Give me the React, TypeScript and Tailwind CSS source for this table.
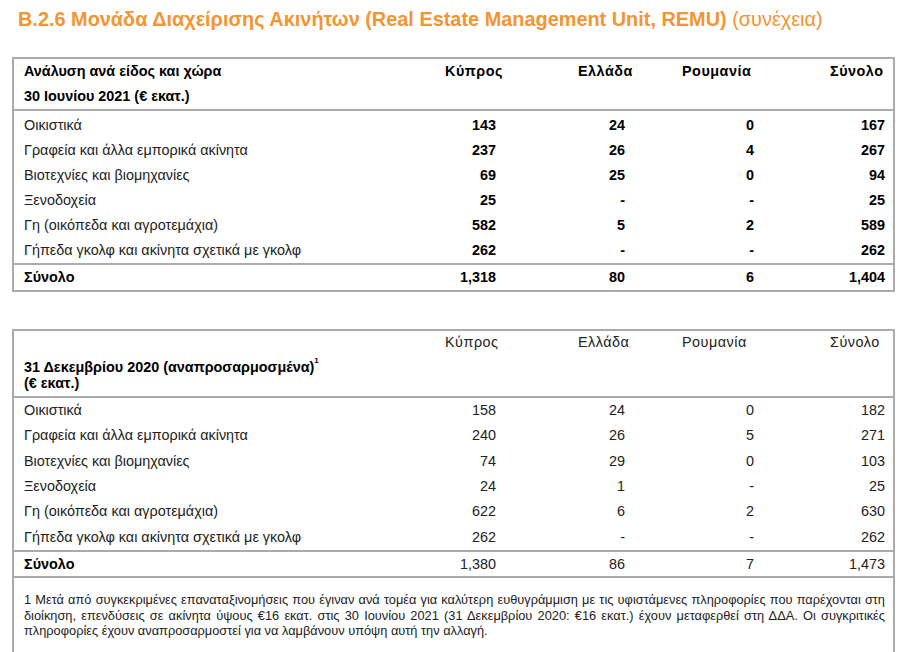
import React from "react";

type Row = { label: string; v: string[] };

const rows1: Row[] = [
  { label: "Οικιστικά", v: ["143", "24", "0", "167"] },
  { label: "Γραφεία και άλλα εμπορικά ακίνητα", v: ["237", "26", "4", "267"] },
  { label: "Βιοτεχνίες και βιομηχανίες", v: ["69", "25", "0", "94"] },
  { label: "Ξενοδοχεία", v: ["25", "-", "-", "25"] },
  { label: "Γη (οικόπεδα και αγροτεμάχια)", v: ["582", "5", "2", "589"] },
  { label: "Γήπεδα γκολφ και ακίνητα σχετικά με γκολφ", v: ["262", "-", "-", "262"] },
];
const total1 = ["1,318", "80", "6", "1,404"];

const rows2: Row[] = [
  { label: "Οικιστικά", v: ["158", "24", "0", "182"] },
  { label: "Γραφεία και άλλα εμπορικά ακίνητα", v: ["240", "26", "5", "271"] },
  { label: "Βιοτεχνίες και βιομηχανίες", v: ["74", "29", "0", "103"] },
  { label: "Ξενοδοχεία", v: ["24", "1", "-", "25"] },
  { label: "Γη (οικόπεδα και αγροτεμάχια)", v: ["622", "6", "2", "630"] },
  { label: "Γήπεδα γκολφ και ακίνητα σχετικά με γκολφ", v: ["262", "-", "-", "262"] },
];
const total2 = ["1,380", "86", "7", "1,473"];

const headers = ["Κύπρος", "Ελλάδα", "Ρουμανία", "Σύνολο"];

const GRID = "grid grid-cols-[431px_56px_129px_127px_130px]";
const numPad = ["pr-[5px]", "pr-[5px]", "pr-[3px]", "pr-[2px]"];
const headPad = ["pl-0", "pl-[77px]", "pl-[52px]", "pl-[73px]"];

function HeaderCells({ bold }: { bold: boolean }) {
  return (
    <>
      {headers.map((h, i) => (
        <div
          key={h}
          className={`${headPad[i]} text-left whitespace-nowrap tracking-[0.5px] ${bold ? "font-bold text-black" : "text-[#222]"}`}
        >
          {h}
        </div>
      ))}
    </>
  );
}

function DataRow({ r, bold, h }: { r: Row; bold: boolean; h: string }) {
  return (
    <div className={`${GRID} ${h} items-center`}>
      <div className="pl-[10px] whitespace-nowrap text-[#222]">{r.label}</div>
      {r.v.map((x, i) => (
        <div
          key={i}
          className={`${numPad[i]} text-right whitespace-nowrap ${bold ? "font-bold text-black" : "text-[#222]"}`}
        >
          {x}
        </div>
      ))}
    </div>
  );
}

export default function App() {
  return (
    <div
      className="w-[900px] h-[652px] overflow-hidden bg-white text-[14.4px]"
      style={{ fontFamily: '"Liberation Sans", Arial, sans-serif' }}
    >
      <div className="pl-[18px] pt-[7px] leading-[24px] text-[19.9px] text-[#f29532] whitespace-nowrap">
        <span className="font-bold">
          B.2.6 Μονάδα Διαχείρισης Ακινήτων (Real Estate Management Unit, REMU)
        </span>{" "}
        <span>(συνέχεια)</span>
      </div>

      {/* Table 1 */}
      <div className="ml-[12px] mt-[26px] w-[883px] border-2 border-[#ababab]">
        <div className={`${GRID} h-[25px] items-center`}>
          <div className="pl-[10px] font-bold text-black whitespace-nowrap">
            Ανάλυση ανά είδος και χώρα
          </div>
          <HeaderCells bold />
        </div>
        <div className="h-[25px] flex items-center pl-[10px] font-bold text-black">
          30 Ιουνίου 2021 (€ εκατ.)
        </div>
        <div className="border-t-2 border-[#ababab] pt-[2px]">
          {rows1.map((r) => (
            <DataRow key={r.label} r={r} bold h="h-[25px]" />
          ))}
        </div>
        <div className="border-t-2 border-[#ababab]">
          <div className={`${GRID} h-[25px] items-center`}>
            <div className="pl-[10px] font-bold text-black">Σύνολο</div>
            {total1.map((x, i) => (
              <div key={i} className={`${numPad[i]} text-right font-bold text-black`}>
                {x}
              </div>
            ))}
          </div>
        </div>
      </div>

      {/* Table 2 */}
      <div className="ml-[12px] mt-[37px] w-[883px] border-2 border-b-0 border-[#ababab]">
        <div className={`${GRID} h-[24px] items-center`}>
          <div />
          <HeaderCells bold={false} />
        </div>
        <div className="pl-[10px] pt-[4px] pb-[5px] leading-[16px] font-bold text-black">
          <div>
            31 Δεκεμβρίου 2020 (αναπροσαρμοσμένα)
            <sup className="text-[8px] align-[5px]">1</sup>
          </div>
          <div>(€ εκατ.)</div>
        </div>
        <div className="border-t-2 border-[#ababab]">
          {rows2.map((r) => (
            <DataRow key={r.label} r={r} bold={false} h="h-[25.4px]" />
          ))}
        </div>
        <div className="border-t-2 border-[#ababab]">
          <div className={`${GRID} h-[24px] items-center`}>
            <div className="pl-[10px] font-bold text-black">Σύνολο</div>
            {total2.map((x, i) => (
              <div key={i} className={`${numPad[i]} text-right text-[#222]`}>
                {x}
              </div>
            ))}
          </div>
        </div>
        <div className="border-t-2 border-[#ababab] min-h-[100px] pl-[10px] pr-[8px] pt-[14px] text-[12.8px] leading-[15.5px] text-[#222] text-justify">
          1 Μετά από συγκεκριμένες επαναταξινομήσεις που έγιναν ανά τομέα για καλύτερη ευθυγράμμιση με τις υφιστάμενες πληροφορίες που παρέχονται στη διοίκηση, επενδύσεις σε ακίνητα ύψους €16 εκατ. στις 30 Ιουνίου 2021 (31 Δεκεμβρίου 2020: €16 εκατ.) έχουν μεταφερθεί στη ΔΔΑ. Οι συγκριτικές πληροφορίες έχουν αναπροσαρμοστεί για να λαμβάνουν υπόψη αυτή την αλλαγή.
        </div>
      </div>
    </div>
  );
}
